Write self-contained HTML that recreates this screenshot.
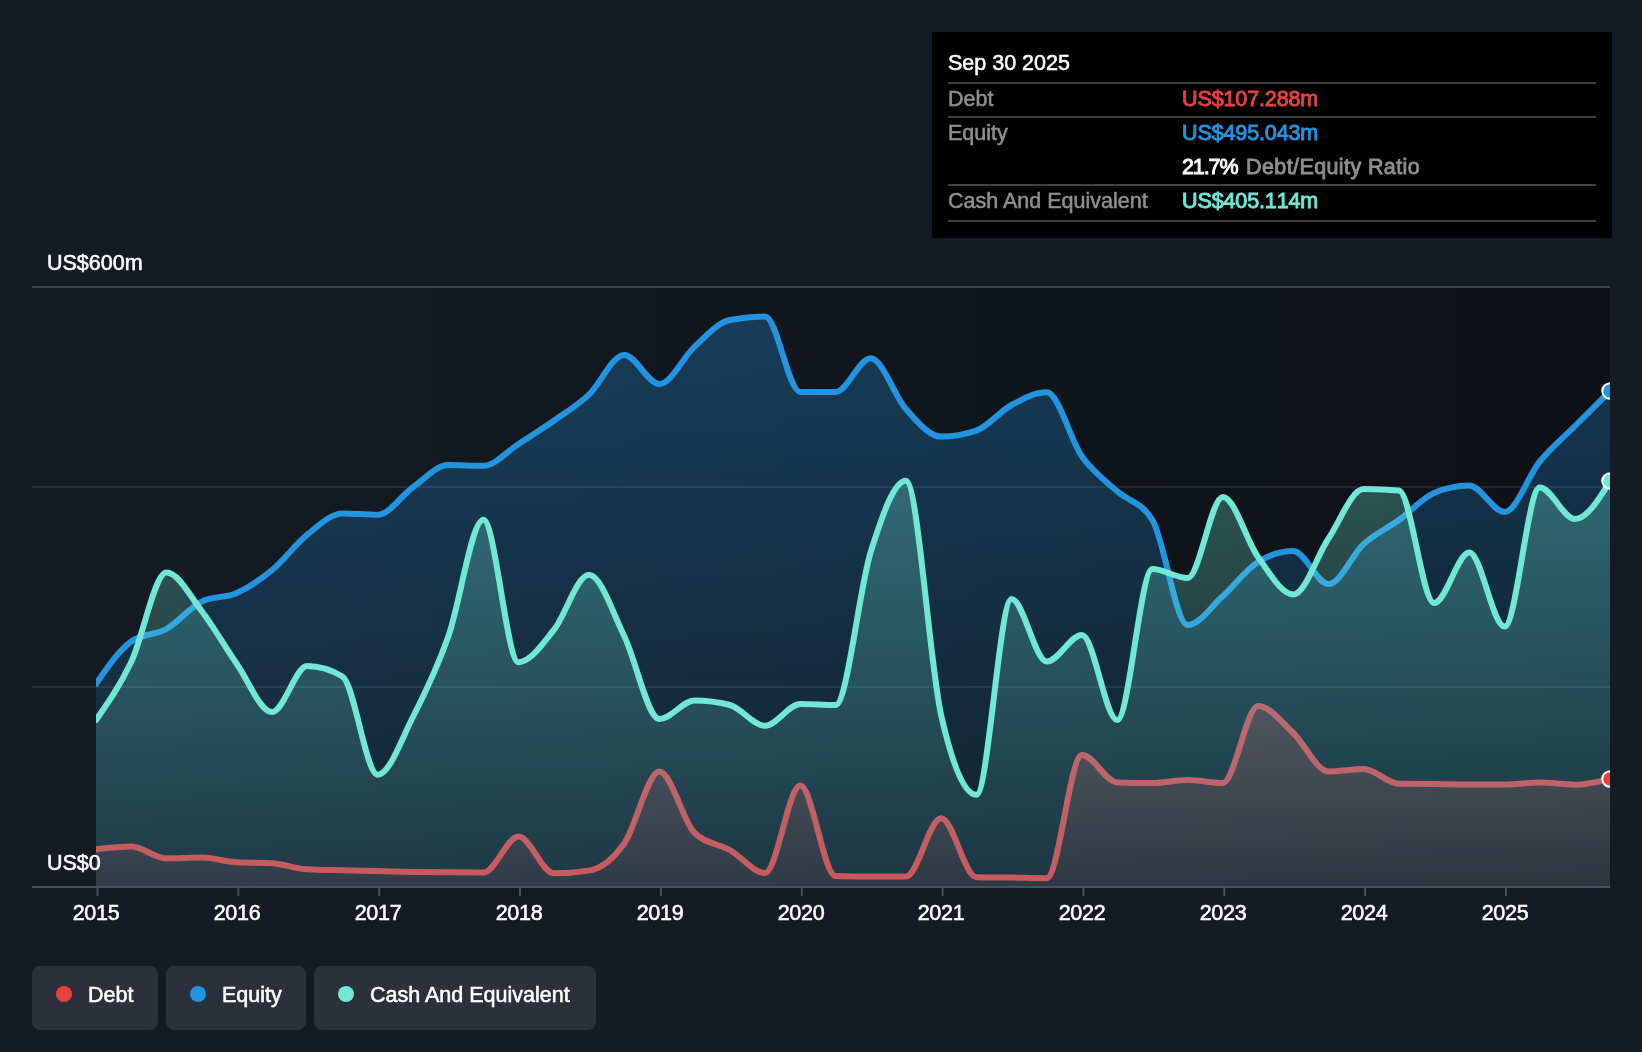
<!DOCTYPE html>
<html lang="en">
<head>
<meta charset="utf-8">
<title>Debt to Equity History</title>
<style>
html,body{margin:0;padding:0;background:#151b24;}
body{width:1642px;-webkit-font-smoothing:antialiased;height:1052px;position:relative;overflow:hidden;font-family:"Liberation Sans",sans-serif;color:#fff;}
#chart{position:absolute;left:0;top:0;}
.t{will-change:transform;position:absolute;white-space:nowrap;font-size:21.5px;line-height:26px;-webkit-text-stroke:0.55px currentColor;}
.yr{will-change:transform;position:absolute;top:900px;width:80px;text-align:center;font-size:21.5px;line-height:26px;letter-spacing:-0.3px;-webkit-text-stroke:0.55px currentColor;}
.lg{position:absolute;top:966px;height:64px;background:#2b303a;border-radius:8px;}
.lg i{position:absolute;left:24px;top:20px;width:16px;height:16px;border-radius:50%;}
.lg span{will-change:transform;position:absolute;left:55.5px;top:15.6px;font-size:21.5px;line-height:26px;white-space:nowrap;-webkit-text-stroke:0.55px currentColor;}
#tip{position:absolute;left:932px;top:32px;width:680px;height:206px;background:#000;}
#tip .hr{position:absolute;left:16px;width:648px;height:2px;background:#414141;}

#tip .l{color:#8f8f8f;left:16px;}
#tip .v{left:250px;font-kerning:none;-webkit-text-stroke:0.95px currentColor;letter-spacing:-0.12px;}
</style>
</head>
<body>
<svg id="chart" width="1642" height="1052" viewBox="0 0 1642 1052">
<defs>
<linearGradient id="bgG" x1="0" y1="0" x2="1" y2="0"><stop offset="0" stop-color="#000" stop-opacity="0"/><stop offset="1" stop-color="#000" stop-opacity="0.37"/></linearGradient>
<linearGradient id="gD" x1="0" y1="0" x2="0" y2="1"><stop offset="0" stop-color="#e64141" stop-opacity="0.3"/><stop offset="1" stop-color="#e64141" stop-opacity="0.1"/></linearGradient>
<linearGradient id="gE" x1="0" y1="0" x2="0" y2="1"><stop offset="0" stop-color="#2394df" stop-opacity="0.3"/><stop offset="1" stop-color="#2394df" stop-opacity="0.1"/></linearGradient>
<linearGradient id="gC" x1="0" y1="0" x2="0" y2="1"><stop offset="0" stop-color="#71e7d6" stop-opacity="0.3"/><stop offset="1" stop-color="#71e7d6" stop-opacity="0.1"/></linearGradient>
<clipPath id="cp"><rect x="96" y="280" width="1514" height="607"/></clipPath>
</defs>
<rect x="96" y="287" width="1514" height="600" fill="url(#bgG)"/>
<rect x="32" y="286" width="1578" height="2" fill="#3d424c"/>
<rect x="32" y="486" width="1578" height="2" fill="#fff" fill-opacity="0.09"/>
<rect x="32" y="686" width="1578" height="2" fill="#fff" fill-opacity="0.09"/>
<g clip-path="url(#cp)">
<path d="M96.00,849.30C107.74,847.95,119.48,846.60,131.21,846.60C142.95,846.60,154.69,858.30,166.43,858.30C178.17,858.30,189.90,857.60,201.64,857.60C213.38,857.60,225.12,861.63,236.86,862.30C248.59,862.97,260.33,862.63,272.07,863.30C283.81,863.97,295.55,868.63,307.28,869.30C319.02,869.97,330.76,870.02,342.50,870.30C354.24,870.58,365.97,870.73,377.71,871.00C389.45,871.27,401.19,871.68,412.93,871.90C424.66,872.12,436.40,872.18,448.14,872.30C459.88,872.42,471.62,872.60,483.35,872.60C495.09,872.60,506.83,836.60,518.57,836.60C530.31,836.60,542.04,873.30,553.78,873.30C565.52,873.30,577.26,872.40,589.00,870.60C600.73,868.80,612.47,860.00,624.21,843.50C635.95,827.00,647.69,771.60,659.42,771.60C671.16,771.60,682.90,821.67,694.64,833.00C706.38,844.33,718.11,843.33,729.85,850.00C741.59,856.67,753.33,873.00,765.07,873.00C776.80,873.00,788.54,785.60,800.28,785.60C812.02,785.60,823.76,875.60,835.49,876.00C847.23,876.40,858.97,876.60,870.71,876.60C882.44,876.60,894.18,876.60,905.92,876.60C917.66,876.60,929.40,818.30,941.13,818.30C952.87,818.30,964.61,876.93,976.35,877.20C988.09,877.47,999.82,877.43,1011.56,877.60C1023.30,877.77,1035.04,878.20,1046.78,878.20C1058.51,878.20,1070.25,755.00,1081.99,755.00C1093.73,755.00,1105.47,782.17,1117.20,782.50C1128.94,782.83,1140.68,783.00,1152.42,783.00C1164.16,783.00,1175.89,780.00,1187.63,780.00C1199.37,780.00,1211.11,783.00,1222.85,783.00C1234.58,783.00,1246.32,706.00,1258.06,706.00C1269.80,706.00,1281.54,722.08,1293.27,733.00C1305.01,743.92,1316.75,771.50,1328.49,771.50C1340.23,771.50,1351.96,769.00,1363.70,769.00C1375.44,769.00,1387.18,783.67,1398.92,783.80C1410.65,783.93,1422.39,783.88,1434.13,784.00C1445.87,784.12,1457.61,784.50,1469.34,784.50C1481.08,784.50,1492.82,784.50,1504.56,784.50C1516.30,784.50,1528.03,782.50,1539.77,782.50C1551.51,782.50,1563.25,784.70,1574.99,784.70C1586.72,784.70,1598.46,781.75,1610.20,778.80L1610.20,886L96.00,886Z" fill="url(#gD)"/>
<path d="M96.00,849.30C107.74,847.95,119.48,846.60,131.21,846.60C142.95,846.60,154.69,858.30,166.43,858.30C178.17,858.30,189.90,857.60,201.64,857.60C213.38,857.60,225.12,861.63,236.86,862.30C248.59,862.97,260.33,862.63,272.07,863.30C283.81,863.97,295.55,868.63,307.28,869.30C319.02,869.97,330.76,870.02,342.50,870.30C354.24,870.58,365.97,870.73,377.71,871.00C389.45,871.27,401.19,871.68,412.93,871.90C424.66,872.12,436.40,872.18,448.14,872.30C459.88,872.42,471.62,872.60,483.35,872.60C495.09,872.60,506.83,836.60,518.57,836.60C530.31,836.60,542.04,873.30,553.78,873.30C565.52,873.30,577.26,872.40,589.00,870.60C600.73,868.80,612.47,860.00,624.21,843.50C635.95,827.00,647.69,771.60,659.42,771.60C671.16,771.60,682.90,821.67,694.64,833.00C706.38,844.33,718.11,843.33,729.85,850.00C741.59,856.67,753.33,873.00,765.07,873.00C776.80,873.00,788.54,785.60,800.28,785.60C812.02,785.60,823.76,875.60,835.49,876.00C847.23,876.40,858.97,876.60,870.71,876.60C882.44,876.60,894.18,876.60,905.92,876.60C917.66,876.60,929.40,818.30,941.13,818.30C952.87,818.30,964.61,876.93,976.35,877.20C988.09,877.47,999.82,877.43,1011.56,877.60C1023.30,877.77,1035.04,878.20,1046.78,878.20C1058.51,878.20,1070.25,755.00,1081.99,755.00C1093.73,755.00,1105.47,782.17,1117.20,782.50C1128.94,782.83,1140.68,783.00,1152.42,783.00C1164.16,783.00,1175.89,780.00,1187.63,780.00C1199.37,780.00,1211.11,783.00,1222.85,783.00C1234.58,783.00,1246.32,706.00,1258.06,706.00C1269.80,706.00,1281.54,722.08,1293.27,733.00C1305.01,743.92,1316.75,771.50,1328.49,771.50C1340.23,771.50,1351.96,769.00,1363.70,769.00C1375.44,769.00,1387.18,783.67,1398.92,783.80C1410.65,783.93,1422.39,783.88,1434.13,784.00C1445.87,784.12,1457.61,784.50,1469.34,784.50C1481.08,784.50,1492.82,784.50,1504.56,784.50C1516.30,784.50,1528.03,782.50,1539.77,782.50C1551.51,782.50,1563.25,784.70,1574.99,784.70C1586.72,784.70,1598.46,781.75,1610.20,778.80" fill="none" stroke="#e64141" stroke-width="6" stroke-linejoin="round" stroke-linecap="round"/>
<path d="M96.00,684.00C107.74,666.92,119.48,649.83,131.21,641.50C142.95,633.17,154.69,635.65,166.43,629.00C178.17,622.35,189.90,607.33,201.64,601.60C213.38,595.87,225.12,598.27,236.86,593.00C248.59,587.73,260.33,579.72,272.07,570.00C283.81,560.28,295.55,544.13,307.28,534.70C319.02,525.27,330.76,513.40,342.50,513.40C354.24,513.40,365.97,514.80,377.71,514.80C389.45,514.80,401.19,495.60,412.93,487.30C424.66,479.00,436.40,465.00,448.14,465.00C459.88,465.00,471.62,465.80,483.35,465.80C495.09,465.80,506.83,451.50,518.57,444.00C530.31,436.50,542.04,429.03,553.78,420.80C565.52,412.57,577.26,405.57,589.00,394.60C600.73,383.63,612.47,355.00,624.21,355.00C635.95,355.00,647.69,384.00,659.42,384.00C671.16,384.00,682.90,357.27,694.64,346.60C706.38,335.93,718.11,322.27,729.85,320.00C741.59,317.73,753.33,316.60,765.07,316.60C776.80,316.60,788.54,392.00,800.28,392.00C812.02,392.00,823.76,392.00,835.49,392.00C847.23,392.00,858.97,358.30,870.71,358.30C882.44,358.30,894.18,395.95,905.92,409.00C917.66,422.05,929.40,436.60,941.13,436.60C952.87,436.60,964.61,434.60,976.35,430.60C988.09,426.60,999.82,411.38,1011.56,405.00C1023.30,398.62,1035.04,392.30,1046.78,392.30C1058.51,392.30,1070.25,440.10,1081.99,456.60C1093.73,473.10,1105.47,480.73,1117.20,491.30C1128.94,501.87,1140.68,500.87,1152.42,520.00C1164.16,539.13,1175.89,625.00,1187.63,625.00C1199.37,625.00,1211.11,606.50,1222.85,596.00C1234.58,585.50,1246.32,569.33,1258.06,562.00C1269.80,554.67,1281.54,551.00,1293.27,551.00C1305.01,551.00,1316.75,584.00,1328.49,584.00C1340.23,584.00,1351.96,554.67,1363.70,544.00C1375.44,533.33,1387.18,528.50,1398.92,520.00C1410.65,511.50,1422.39,497.93,1434.13,493.00C1445.87,488.07,1457.61,485.60,1469.34,485.60C1481.08,485.60,1492.82,512.00,1504.56,512.00C1516.30,512.00,1528.03,475.83,1539.77,461.50C1551.51,447.17,1563.25,437.75,1574.99,426.00C1586.72,414.25,1598.46,402.62,1610.20,391.00L1610.20,886L96.00,886Z" fill="url(#gE)"/>
<path d="M96.00,684.00C107.74,666.92,119.48,649.83,131.21,641.50C142.95,633.17,154.69,635.65,166.43,629.00C178.17,622.35,189.90,607.33,201.64,601.60C213.38,595.87,225.12,598.27,236.86,593.00C248.59,587.73,260.33,579.72,272.07,570.00C283.81,560.28,295.55,544.13,307.28,534.70C319.02,525.27,330.76,513.40,342.50,513.40C354.24,513.40,365.97,514.80,377.71,514.80C389.45,514.80,401.19,495.60,412.93,487.30C424.66,479.00,436.40,465.00,448.14,465.00C459.88,465.00,471.62,465.80,483.35,465.80C495.09,465.80,506.83,451.50,518.57,444.00C530.31,436.50,542.04,429.03,553.78,420.80C565.52,412.57,577.26,405.57,589.00,394.60C600.73,383.63,612.47,355.00,624.21,355.00C635.95,355.00,647.69,384.00,659.42,384.00C671.16,384.00,682.90,357.27,694.64,346.60C706.38,335.93,718.11,322.27,729.85,320.00C741.59,317.73,753.33,316.60,765.07,316.60C776.80,316.60,788.54,392.00,800.28,392.00C812.02,392.00,823.76,392.00,835.49,392.00C847.23,392.00,858.97,358.30,870.71,358.30C882.44,358.30,894.18,395.95,905.92,409.00C917.66,422.05,929.40,436.60,941.13,436.60C952.87,436.60,964.61,434.60,976.35,430.60C988.09,426.60,999.82,411.38,1011.56,405.00C1023.30,398.62,1035.04,392.30,1046.78,392.30C1058.51,392.30,1070.25,440.10,1081.99,456.60C1093.73,473.10,1105.47,480.73,1117.20,491.30C1128.94,501.87,1140.68,500.87,1152.42,520.00C1164.16,539.13,1175.89,625.00,1187.63,625.00C1199.37,625.00,1211.11,606.50,1222.85,596.00C1234.58,585.50,1246.32,569.33,1258.06,562.00C1269.80,554.67,1281.54,551.00,1293.27,551.00C1305.01,551.00,1316.75,584.00,1328.49,584.00C1340.23,584.00,1351.96,554.67,1363.70,544.00C1375.44,533.33,1387.18,528.50,1398.92,520.00C1410.65,511.50,1422.39,497.93,1434.13,493.00C1445.87,488.07,1457.61,485.60,1469.34,485.60C1481.08,485.60,1492.82,512.00,1504.56,512.00C1516.30,512.00,1528.03,475.83,1539.77,461.50C1551.51,447.17,1563.25,437.75,1574.99,426.00C1586.72,414.25,1598.46,402.62,1610.20,391.00" fill="none" stroke="#2394df" stroke-width="6" stroke-linejoin="round" stroke-linecap="round"/>
<path d="M96.00,720.00C107.74,703.28,119.48,686.57,131.21,662.00C142.95,637.43,154.69,572.60,166.43,572.60C178.17,572.60,189.90,595.77,201.64,611.00C213.38,626.23,225.12,647.17,236.86,664.00C248.59,680.83,260.33,712.00,272.07,712.00C283.81,712.00,295.55,666.00,307.28,666.00C319.02,666.00,330.76,669.50,342.50,676.50C354.24,683.50,365.97,774.70,377.71,774.70C389.45,774.70,401.19,739.95,412.93,717.00C424.66,694.05,436.40,669.87,448.14,637.00C459.88,604.13,471.62,519.80,483.35,519.80C495.09,519.80,506.83,662.20,518.57,662.20C530.31,662.20,542.04,644.57,553.78,630.00C565.52,615.43,577.26,574.80,589.00,574.80C600.73,574.80,612.47,611.97,624.21,636.00C635.95,660.03,647.69,719.00,659.42,719.00C671.16,719.00,682.90,700.50,694.64,700.50C706.38,700.50,718.11,702.00,729.85,705.00C741.59,708.00,753.33,725.80,765.07,725.80C776.80,725.80,788.54,704.00,800.28,704.00C812.02,704.00,823.76,705.00,835.49,705.00C847.23,705.00,858.97,589.38,870.71,552.00C882.44,514.62,894.18,480.70,905.92,480.70C917.66,480.70,929.40,662.65,941.13,715.00C952.87,767.35,964.61,794.80,976.35,794.80C988.09,794.80,999.82,599.00,1011.56,599.00C1023.30,599.00,1035.04,661.50,1046.78,661.50C1058.51,661.50,1070.25,635.00,1081.99,635.00C1093.73,635.00,1105.47,720.00,1117.20,720.00C1128.94,720.00,1140.68,569.00,1152.42,569.00C1164.16,569.00,1175.89,578.00,1187.63,578.00C1199.37,578.00,1211.11,497.00,1222.85,497.00C1234.58,497.00,1246.32,540.75,1258.06,557.00C1269.80,573.25,1281.54,594.50,1293.27,594.50C1305.01,594.50,1316.75,556.10,1328.49,538.50C1340.23,520.90,1351.96,488.90,1363.70,488.90C1375.44,488.90,1387.18,489.43,1398.92,490.50C1410.65,491.57,1422.39,603.00,1434.13,603.00C1445.87,603.00,1457.61,552.60,1469.34,552.60C1481.08,552.60,1492.82,626.60,1504.56,626.60C1516.30,626.60,1528.03,487.40,1539.77,487.40C1551.51,487.40,1563.25,519.00,1574.99,519.00C1586.72,519.00,1598.46,500.00,1610.20,481.00L1610.20,886L96.00,886Z" fill="url(#gC)"/>
<path d="M96.00,720.00C107.74,703.28,119.48,686.57,131.21,662.00C142.95,637.43,154.69,572.60,166.43,572.60C178.17,572.60,189.90,595.77,201.64,611.00C213.38,626.23,225.12,647.17,236.86,664.00C248.59,680.83,260.33,712.00,272.07,712.00C283.81,712.00,295.55,666.00,307.28,666.00C319.02,666.00,330.76,669.50,342.50,676.50C354.24,683.50,365.97,774.70,377.71,774.70C389.45,774.70,401.19,739.95,412.93,717.00C424.66,694.05,436.40,669.87,448.14,637.00C459.88,604.13,471.62,519.80,483.35,519.80C495.09,519.80,506.83,662.20,518.57,662.20C530.31,662.20,542.04,644.57,553.78,630.00C565.52,615.43,577.26,574.80,589.00,574.80C600.73,574.80,612.47,611.97,624.21,636.00C635.95,660.03,647.69,719.00,659.42,719.00C671.16,719.00,682.90,700.50,694.64,700.50C706.38,700.50,718.11,702.00,729.85,705.00C741.59,708.00,753.33,725.80,765.07,725.80C776.80,725.80,788.54,704.00,800.28,704.00C812.02,704.00,823.76,705.00,835.49,705.00C847.23,705.00,858.97,589.38,870.71,552.00C882.44,514.62,894.18,480.70,905.92,480.70C917.66,480.70,929.40,662.65,941.13,715.00C952.87,767.35,964.61,794.80,976.35,794.80C988.09,794.80,999.82,599.00,1011.56,599.00C1023.30,599.00,1035.04,661.50,1046.78,661.50C1058.51,661.50,1070.25,635.00,1081.99,635.00C1093.73,635.00,1105.47,720.00,1117.20,720.00C1128.94,720.00,1140.68,569.00,1152.42,569.00C1164.16,569.00,1175.89,578.00,1187.63,578.00C1199.37,578.00,1211.11,497.00,1222.85,497.00C1234.58,497.00,1246.32,540.75,1258.06,557.00C1269.80,573.25,1281.54,594.50,1293.27,594.50C1305.01,594.50,1316.75,556.10,1328.49,538.50C1340.23,520.90,1351.96,488.90,1363.70,488.90C1375.44,488.90,1387.18,489.43,1398.92,490.50C1410.65,491.57,1422.39,603.00,1434.13,603.00C1445.87,603.00,1457.61,552.60,1469.34,552.60C1481.08,552.60,1492.82,626.60,1504.56,626.60C1516.30,626.60,1528.03,487.40,1539.77,487.40C1551.51,487.40,1563.25,519.00,1574.99,519.00C1586.72,519.00,1598.46,500.00,1610.20,481.00" fill="none" stroke="#71e7d6" stroke-width="6" stroke-linejoin="round" stroke-linecap="round"/>
<circle cx="1610" cy="391" r="7.75" fill="#2394df" stroke="#fff" stroke-width="2"/>
<circle cx="1610" cy="481" r="7.75" fill="#71e7d6" stroke="#fff" stroke-width="2"/>
<circle cx="1610" cy="779" r="7.75" fill="#e64141" stroke="#fff" stroke-width="2"/>
</g>
<rect x="32" y="886" width="1578" height="2" fill="#4b505a"/>
<rect x="96.5" y="887" width="2" height="9" fill="#4b505a"/><rect x="237.3" y="887" width="2" height="9" fill="#4b505a"/><rect x="378.2" y="887" width="2" height="9" fill="#4b505a"/><rect x="519.0" y="887" width="2" height="9" fill="#4b505a"/><rect x="659.9" y="887" width="2" height="9" fill="#4b505a"/><rect x="800.8" y="887" width="2" height="9" fill="#4b505a"/><rect x="941.6" y="887" width="2" height="9" fill="#4b505a"/><rect x="1082.4" y="887" width="2" height="9" fill="#4b505a"/><rect x="1223.3" y="887" width="2" height="9" fill="#4b505a"/><rect x="1364.1" y="887" width="2" height="9" fill="#4b505a"/><rect x="1505.0" y="887" width="2" height="9" fill="#4b505a"/>
</svg>
<div class="t" id="y600" style="left:47.4px;top:249.7px">US$600m</div>
<div class="t" id="y0" style="left:47.4px;top:849.7px">US$0</div>
<div class="yr" style="left:56.3px">2015</div><div class="yr" style="left:197.2px">2016</div><div class="yr" style="left:338.0px">2017</div><div class="yr" style="left:478.9px">2018</div><div class="yr" style="left:619.8px">2019</div><div class="yr" style="left:760.6px">2020</div><div class="yr" style="left:901.4px">2021</div><div class="yr" style="left:1042.3px">2022</div><div class="yr" style="left:1183.1px">2023</div><div class="yr" style="left:1324.0px">2024</div><div class="yr" style="left:1464.8px">2025</div>
<div class="lg" style="left:32px;width:126px"><i style="background:#e64141"></i><span id="lgD">Debt</span></div>
<div class="lg" style="left:166px;width:140px"><i style="background:#2394df"></i><span id="lgE">Equity</span></div>
<div class="lg" style="left:314px;width:282px"><i style="background:#71e7d6"></i><span id="lgC">Cash And Equivalent</span></div>
<div id="tip">
<div class="t" id="tDate" style="left:16px;top:17.5px">Sep 30 2025</div>
<div class="hr" style="top:50px"></div>
<div class="t l" id="tl1" style="top:53.5px">Debt</div><div class="t v" id="tv1" style="top:53.5px;color:#e64141">US$107.288m</div>
<div class="hr" style="top:84px"></div>
<div class="t l" id="tl2" style="top:87.5px">Equity</div><div class="t v" id="tv2" style="top:87.5px;color:#2394df">US$495.043m</div>
<div class="t v" id="tv3a" style="top:121.5px;color:#fff;letter-spacing:-1.1px">21.7%</div><div class="t" id="tv3b" style="top:121.5px;left:314px;color:#8f8f8f;letter-spacing:0.4px;-webkit-text-stroke:0.85px currentColor">Debt/Equity Ratio</div>
<div class="hr" style="top:152px"></div>
<div class="t l" id="tl4" style="top:155.5px">Cash And Equivalent</div><div class="t v" id="tv4" style="top:155.5px;color:#71e7d6">US$405.114m</div>
<div class="hr" style="top:188px"></div>
</div>
</body>
</html>
